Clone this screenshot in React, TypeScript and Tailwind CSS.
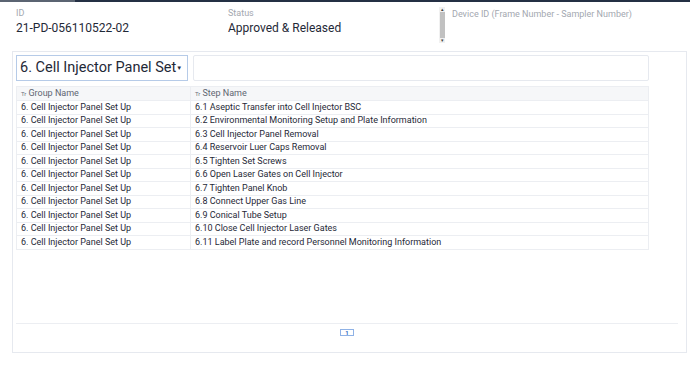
const rows = [
  '6.1 Aseptic Transfer into Cell Injector BSC',
  '6.2 Environmental Monitoring Setup and Plate Information',
  '6.3 Cell Injector Panel Removal',
  '6.4 Reservoir Luer Caps Removal',
  '6.5 Tighten Set Screws',
  '6.6 Open Laser Gates on Cell Injector',
  '6.7 Tighten Panel Knob',
  '6.8 Connect Upper Gas Line',
  '6.9 Conical Tube Setup',
  '6.10 Close Cell Injector Laser Gates',
  '6.11 Label Plate and record Personnel Monitoring Information',
];

function TypeIcon() {
  return <span className="mr-[2px] inline-block text-[6px] leading-none text-[#6b7280]">Tr</span>;
}

export default function App() {
  return (
    <div className="h-[376px] w-[690px] overflow-hidden bg-white font-['Roboto',sans-serif] text-[#1f2937]">
      <div className="flex h-[2px]">
        <div className="w-[75px] bg-[#5b6472]" />
        <div className="flex-1 bg-[#243044]" />
      </div>

      <div className="flex h-[49px] pl-4">
        <div className="w-[212px] pt-[5px]">
          <div className="text-[9px] leading-[12px] text-[#a3a8b0]">ID</div>
          <div className="mt-[1px] text-[12px] leading-[16px]">21-PD-056110522-02</div>
        </div>
        <div className="w-[211px] pt-[5px]">
          <div className="text-[9px] leading-[12px] text-[#a3a8b0]">Status</div>
          <div className="mt-[1px] text-[12px] leading-[16px]">Approved &amp; Released</div>
        </div>
        <div className="flex pt-[5px]">
          <div className="flex h-[36px] w-[6px] flex-col items-center justify-between bg-[#f1f1f1]">
            <span className="text-[5px] leading-[5px] text-[#444]">▴</span>
            <div className="w-[5px] flex-1 bg-[#c1c1c1]" />
            <span className="text-[5px] leading-[5px] text-[#444]">▾</span>
          </div>
          <div className="ml-[7px] pt-[1px] text-[9px] leading-[12px] text-[#a3a8b0]">
            Device ID (Frame Number - Sampler Number)
          </div>
        </div>
      </div>

      <div className="ml-3 flex h-[302px] w-[675px] flex-col border border-[#e6e9ef]">
        <div className="flex gap-[5px] pl-[3px] pt-[3px]">
          <div className="flex h-[26px] w-[172px] items-center whitespace-nowrap border border-[#b6cbe8] pl-[3px]">
            <span className="text-[14.5px] leading-none">6. Cell Injector Panel Set</span>
            <span className="text-[6px] leading-none">▼</span>
          </div>
          <div className="h-[26px] w-[456px] rounded-[2px] border border-[#e6e9ef]" />
        </div>

        <div className="ml-[3px] mt-[5px] w-[633px] border border-[#eceef2] text-[9px]">
          <div className="flex h-[13px] items-center bg-[#f6f7f9] text-[#5f6672]">
            <div className="flex w-[173px] items-center pl-[4px]">
              <TypeIcon />
              Group Name
            </div>
            <div className="flex h-full flex-1 items-center border-l border-[#eceef2] pl-[4px]">
              <TypeIcon />
              Step Name
            </div>
          </div>
          {rows.map((step) => (
            <div key={step} className="flex h-[13.5px] items-center border-t border-[#eceef2]">
              <div className="w-[173px] pl-[4px]">6. Cell Injector Panel Set Up</div>
              <div className="flex h-full flex-1 items-center border-l border-[#eceef2] pl-[4px]">{step}</div>
            </div>
          ))}
        </div>

        <div className="flex-1" />
        <div className="ml-[3px] mr-[8px] h-[29px] border-t border-[#eceef2]">
          <div className="mx-auto mt-[5px] flex h-[7px] w-[14px] items-center justify-center border border-[#8fb2e6] text-[6px] font-bold leading-none text-[#3b6fc4]">
            1
          </div>
        </div>
      </div>
    </div>
  );
}
